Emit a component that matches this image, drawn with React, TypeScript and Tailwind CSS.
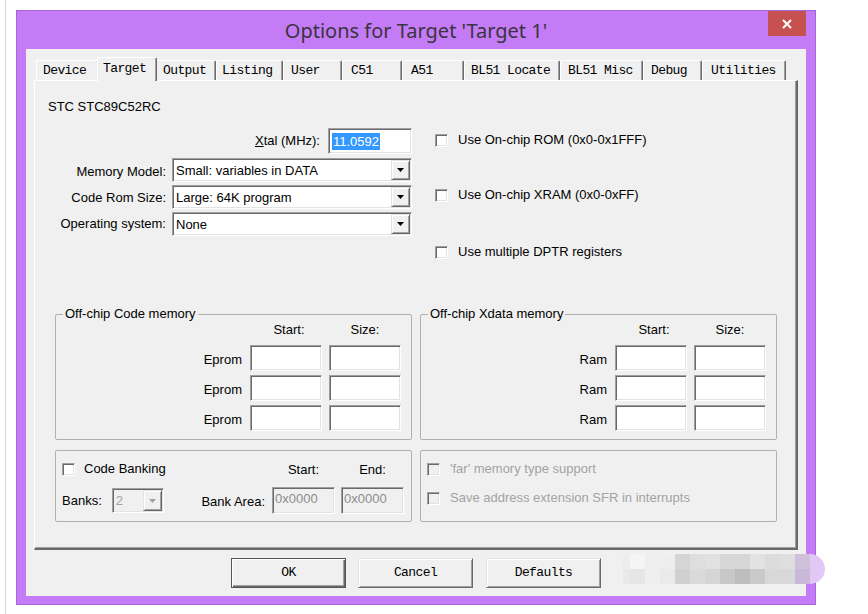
import React from "react";

const SANS = "font-['Liberation_Sans',Arial,sans-serif]";
const MONO = "font-['Liberation_Mono','Courier_New',monospace]";

const sunken =
  "border border-t-[#a0a0a0] border-l-[#a0a0a0] border-r-white border-b-white shadow-[inset_1px_1px_0_#696969,inset_-1px_-1px_0_#e3e3e3]";
const raised =
  "border border-t-[#e3e3e3] border-l-[#e3e3e3] border-r-[#696969] border-b-[#696969] shadow-[inset_1px_1px_0_#ffffff,inset_-1px_-1px_0_#a0a0a0]";

type Tab = { label: string; w: string; pl: string; active?: boolean };

const tabs: Tab[] = [
  { label: "Device", w: "w-[63px]", pl: "pl-[6px]" },
  { label: "Target", w: "w-[60px]", pl: "pl-[5px]", active: true },
  { label: "Output", w: "w-[61px]", pl: "pl-[7px]" },
  { label: "Listing", w: "w-[67px]", pl: "pl-[5px]" },
  { label: "User", w: "w-[59px]", pl: "pl-[7px]" },
  { label: "C51", w: "w-[60px]", pl: "pl-[8px]" },
  { label: "A51", w: "w-[62px]", pl: "pl-[8px]" },
  { label: "BL51 Locate", w: "w-[96px]", pl: "pl-[6px]" },
  { label: "BL51 Misc", w: "w-[83px]", pl: "pl-[7px]" },
  { label: "Debug", w: "w-[59px]", pl: "pl-[7px]" },
  { label: "Utilities", w: "w-[84px]", pl: "pl-[8px]" },
];

function Tri({ gray }: { gray?: boolean }) {
  return (
    <svg width="7" height="4" viewBox="0 0 7 4">
      <polygon points="0,0 7,0 3.5,4" fill={gray ? "#a0a0a0" : "#000000"} />
    </svg>
  );
}

function Check({ disabled }: { disabled?: boolean }) {
  return (
    <span
      className={`block w-[13px] h-[13px] shrink-0 ${
        disabled ? "bg-[#f0f0f0]" : "bg-white"
      } ${sunken}`}
    />
  );
}

function Select({ value }: { value: string }) {
  return (
    <div className={`flex items-center w-[240px] h-[24px] bg-white pl-[3px] pr-[1px] ${sunken}`}>
      <span className="flex-1 text-[13px] leading-[16px] text-black pt-[1px]">{value}</span>
      <span className={`flex items-center justify-center w-[19px] h-[20px] bg-[#f0f0f0] ${raised}`}>
        <Tri />
      </span>
    </div>
  );
}

function Box({ w }: { w: string }) {
  return <div className={`${w} h-[26px] bg-white ${sunken}`} />;
}

function MemGroup({ title, label }: { title: string; label: string }) {
  return (
    <fieldset className="border border-[#b0b0b0] rounded-[2px] pr-[10px] pb-[8px]">
      <legend className="ml-[7px] px-[2px] text-[13px] leading-[16px] text-black">{title}</legend>
      <div className="flex justify-end gap-[7px] h-[16px] text-[13px] leading-[16px]">
        <span className="w-[72px] text-center pl-[6px]">Start:</span>
        <span className="w-[72px] text-center">Size:</span>
      </div>
      <div className="mt-[7px] flex flex-col gap-[4px]">
        {[0, 1, 2].map((i) => (
          <div key={i} className="flex justify-end items-center">
            <span className="text-[13px] leading-[16px] mr-[8px] pt-[3px]">{label}</span>
            <Box w="w-[72px]" />
            <span className="w-[7px]" />
            <Box w="w-[72px]" />
          </div>
        ))}
      </div>
    </fieldset>
  );
}

function Button({ label, def }: { label: string; def?: boolean }) {
  return (
    <div
      className={`w-[115px] h-[30px] flex items-center justify-center bg-[#f0f0f0] ${
        def
          ? "border border-[#555555] shadow-[inset_1px_1px_0_#ffffff,inset_-1px_-1px_0_#696969,inset_-2px_-2px_0_#a0a0a0]"
          : raised
      }`}
    >
      <span className={`${MONO} text-[13px] tracking-[-0.6px] leading-[16px] text-black`}>{label}</span>
    </div>
  );
}

const wmRow1 = [
  "bg-[#ededed]",
  "bg-[#f5f5f5]",
  "bg-[#efefef]",
  "bg-[#eeeeee]",
  "bg-[#d5d5d5]",
  "bg-[#dedede]",
  "bg-[#e1e1e1]",
  "bg-[#d7d7d7]",
  "bg-[#d7d7d7]",
  "bg-[#e2e2e2]",
  "bg-[#dcdcdc]",
  "bg-[#dedede]",
  "bg-[#cfc1dc]",
];
const wmRow2 = [
  "bg-[#e9e9e9]",
  "bg-[#e6e6e6]",
  "bg-[#efefef]",
  "bg-[#eaeaea]",
  "bg-[#d0d0d0]",
  "bg-[#dadada]",
  "bg-[#d5d5d5]",
  "bg-[#c8c8c8]",
  "bg-[#bdbdbd]",
  "bg-[#c9c9c9]",
  "bg-[#d8d8d8]",
  "bg-[#d8d8d8]",
  "bg-[#c9b8d9]",
];

function Watermark() {
  return (
    <div className="absolute left-[623px] top-[554px] flex">
      <div className="flex flex-col">
        {[wmRow1, wmRow2].map((row, r) => (
          <div key={r} className="flex h-[15px]">
            {row.map((c, i) => (
              <div key={i} className={`${i === 0 ? "w-[7px]" : "w-[15px]"} h-[15px] ${c}`} />
            ))}
          </div>
        ))}
      </div>
      <div className="w-[15px] h-[30px] rounded-r-full bg-[#e2c9f5]" />
    </div>
  );
}

export default function App() {
  return (
    <div className={`relative w-[868px] h-[614px] bg-white pl-[5px] overflow-hidden ${SANS} text-black`}>
      <div className="h-full border-l border-[#d6d6d6] pl-[10px] pt-[10px]">
        {/* window */}
        <div className="w-[800px] h-[595px] flex flex-col border border-[#a466da] bg-[#c47cf6]">
          {/* title bar */}
          <div className="grid grid-cols-[1fr_auto_1fr] h-[38px]">
            <div />
            <div className="self-center font-['Noto_Sans','Open_Sans',sans-serif] text-[20px] leading-[24px] text-[#3b3340] pt-[1px]">
              Options for Target 'Target 1'
            </div>
            <div className="flex justify-end items-start pr-[9px]">
              <div className="w-[38px] h-[25px] bg-[#c75050] flex items-center justify-center">
                <svg width="10" height="10" viewBox="0 0 10 10">
                  <path d="M1 1 L9 9 M9 1 L1 9" stroke="#ffffff" strokeWidth="2" />
                </svg>
              </div>
            </div>
          </div>

          {/* client */}
          <div className="mx-[9px] mb-[8px] flex-1 bg-[#f0f0f0] px-[8px] pt-[8px] flex flex-col">
            {/* tabs */}
            <div className="relative z-10 flex items-end h-[23px] pl-[2px]">
              {tabs.map((t) =>
                t.active ? (
                  <div
                    key={t.label}
                    className={`relative z-10 flex items-start ${t.w} ${t.pl} h-[24px] -mx-[2px] -mb-[1px] pt-[3px] bg-[#f0f0f0] border-l border-t border-white border-r border-r-[#696969] shadow-[inset_-1px_0_0_#a0a0a0] rounded-t-[2px]`}
                  >
                    <span className={`${MONO} text-[13px] tracking-[-0.6px] leading-[16px]`}>{t.label}</span>
                  </div>
                ) : (
                  <div
                    key={t.label}
                    className={`${t.w} ${t.pl} h-[20px] flex items-center bg-[#f0f0f0] border-l border-t border-white border-r border-r-[#696969] shadow-[inset_-1px_0_0_#a0a0a0] rounded-t-[2px]`}
                  >
                    <span className={`${MONO} text-[13px] tracking-[-0.6px] leading-[16px]`}>{t.label}</span>
                  </div>
                )
              )}
            </div>

            {/* panel */}
            <div className="h-[470px] flex flex-col border-l border-t border-white border-r-2 border-b-2 border-r-[#696969] border-b-[#696969] shadow-[inset_-1px_-1px_0_#a0a0a0] text-[13px] leading-[16px]">
              <div className="pt-[18px] pl-[13px] h-[34px]">STC STC89C52RC</div>

              <div className="mt-[13px] flex items-start">
                {/* left form */}
                <div className="w-[377px] flex flex-col">
                  <div className="flex justify-end items-center gap-[8px] h-[26px]">
                    <span>
                      <span className="underline">X</span>tal (MHz):
                    </span>
                    <div className={`w-[84px] h-[26px] bg-white flex items-center pl-[3px] ${sunken}`}>
                      <span className="bg-[#3399ff] text-white px-[1px] leading-[17px]">11.0592</span>
                    </div>
                  </div>
                  <div className="mt-[4px] grid grid-cols-[131px_240px] gap-x-[6px] gap-y-[3px] items-center">
                    <span className="text-right pt-[3px]">Memory Model:</span>
                    <Select value="Small: variables in DATA" />
                    <span className="text-right pt-[2px]">Code Rom Size:</span>
                    <Select value="Large: 64K program" />
                    <span className="text-right">Operating system:</span>
                    <Select value="None" />
                  </div>
                </div>

                {/* right checkboxes */}
                <div className="ml-[23px] flex flex-col">
                  <div className="mt-[4px] h-[16px] flex items-center gap-[10px]">
                    <Check />
                    <span>Use On-chip ROM (0x0-0x1FFF)</span>
                  </div>
                  <div className="mt-[39px] h-[16px] flex items-center gap-[10px]">
                    <Check />
                    <span>Use On-chip XRAM (0x0-0xFF)</span>
                  </div>
                  <div className="mt-[41px] h-[16px] flex items-center gap-[10px]">
                    <Check />
                    <span>Use multiple DPTR registers</span>
                  </div>
                </div>
              </div>

              {/* memory groups */}
              <div className="mt-[46px] grid grid-cols-2 gap-x-[8px] pl-[20px] pr-[19px]">
                <MemGroup title="Off-chip Code memory" label="Eprom" />
                <MemGroup title="Off-chip Xdata memory" label="Ram" />
              </div>

              {/* banking */}
              <div className="mt-[10px] grid grid-cols-2 gap-x-[8px] pl-[20px] pr-[19px]">
                <div className="border border-[#b0b0b0] rounded-[2px] pt-[10px] pl-[6px] pr-[7px] pb-[7px]">
                  <div className="h-[16px] flex items-center">
                    <div className="flex-1 flex items-center gap-[9px]">
                      <Check />
                      <span>Code Banking</span>
                    </div>
                    <span className="w-[63px] text-center pt-[2px]">Start:</span>
                    <span className="w-[6px]" />
                    <span className="w-[63px] text-center pt-[2px]">End:</span>
                  </div>
                  <div className="mt-[10px] h-[27px] flex items-center">
                    <span>Banks:</span>
                    <div className={`ml-[10px] w-[52px] h-[25px] bg-[#f0f0f0] flex items-center pl-[3px] pr-[1px] ${sunken}`}>
                      <span className="flex-1 text-[#a0a0a0]">2</span>
                      <span className={`flex items-center justify-center w-[19px] h-[21px] bg-[#f0f0f0] ${raised}`}>
                        <Tri gray />
                      </span>
                    </div>
                    <span className="flex-1" />
                    <span className="mt-[3px]">Bank Area:</span>
                    <div className={`ml-[7px] w-[63px] h-[27px] bg-[#f0f0f0] pl-[2px] pt-[3px] text-[#8c8c8c] ${sunken}`}>0x0000</div>
                    <div className={`ml-[6px] w-[63px] h-[27px] bg-[#f0f0f0] pl-[2px] pt-[3px] text-[#8c8c8c] ${sunken}`}>0x0000</div>
                  </div>
                </div>
                <div className="border border-[#b0b0b0] rounded-[2px] pt-[10px] pl-[6px] text-[#a3a3a3]">
                  <div className="h-[16px] flex items-center gap-[10px]">
                    <Check disabled />
                    <span>'far' memory type support</span>
                  </div>
                  <div className="mt-[13px] h-[16px] flex items-center gap-[10px]">
                    <Check disabled />
                    <span>Save address extension SFR in interrupts</span>
                  </div>
                </div>
              </div>
            </div>

            {/* buttons */}
            <div className="mt-[8px] flex justify-center">
              <Button label="OK" def />
              <span className="w-[12px]" />
              <Button label="Cancel" />
              <span className="w-[13px]" />
              <Button label="Defaults" />
            </div>
          </div>
        </div>
      </div>
      <Watermark />
    </div>
  );
}
